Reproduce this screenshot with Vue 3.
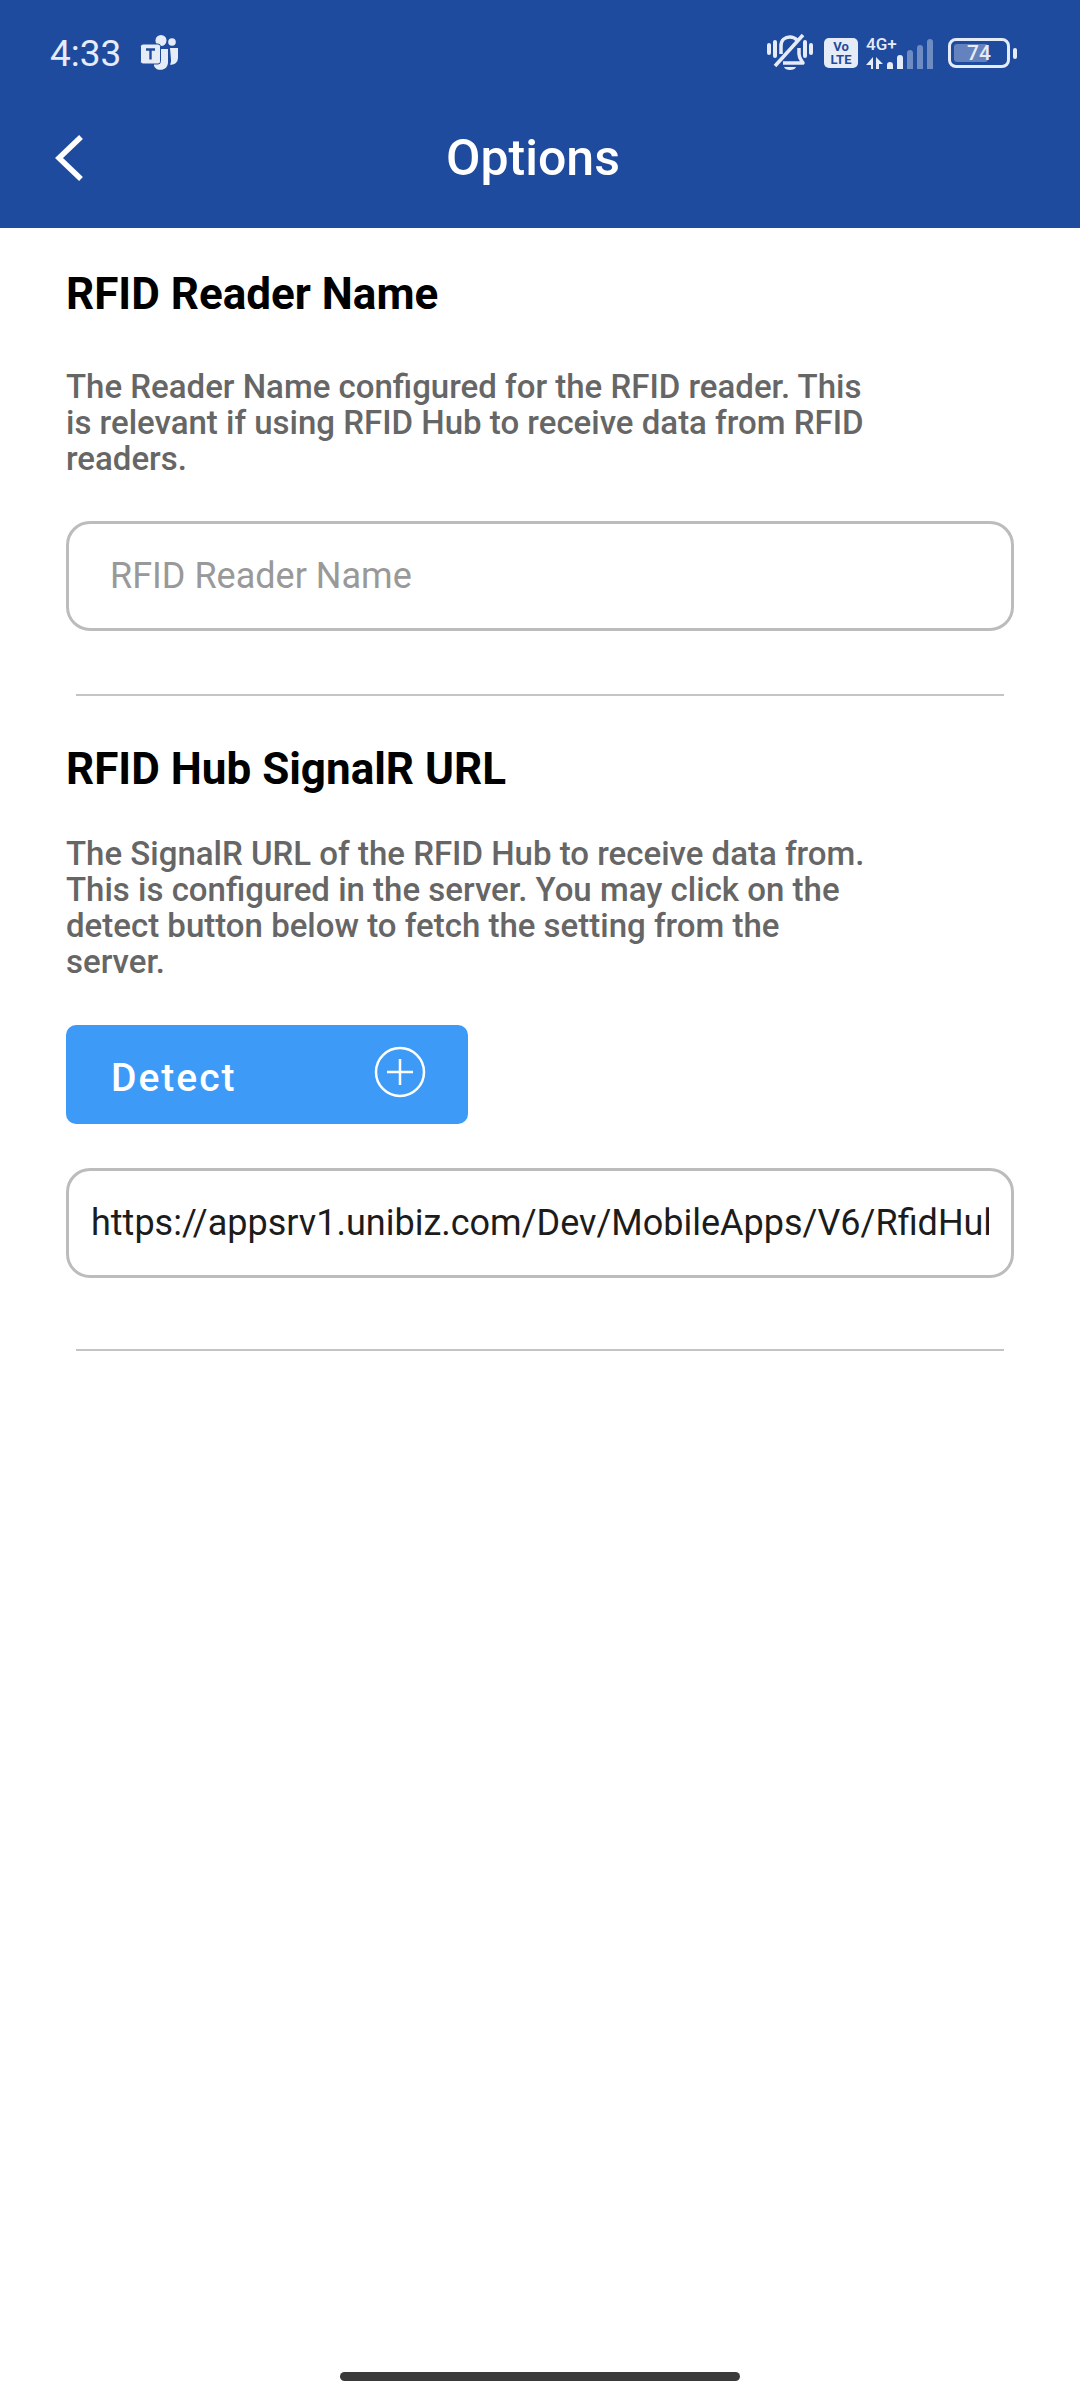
<script setup>
import { ref } from 'vue'

const readerName = ref('')
const hubUrl = ref('https://appsrv1.unibiz.com/Dev/MobileApps/V6/RfidHub')
</script>

<template>
  <div class="page">
    <header class="app-header">
      <div class="status-bar">
        <div class="status-left">
          <span class="clock">4:33</span>
          <svg class="teams" width="40" height="38" viewBox="0 0 40 38">
            <circle cx="21" cy="6.500" r="5.500" fill="#e6ecf7" />
            <circle cx="32" cy="8" r="3.800" fill="#e6ecf7" />
            <path d="M14 15h14v14a7.500 7.500 0 0 1-14 3z" fill="#e6ecf7" />
            <path d="M30 14h8v10a6.500 6.500 0 0 1-8 6.500c1-1.500 1-3 1-5z" fill="#e6ecf7" />
            <rect x="0.500" y="10" width="20" height="20" rx="2.500" fill="#e6ecf7" stroke="#1f4b9f" stroke-width="1" />
            <path d="M6 15.500h9M10.500 15.500v10" stroke="#1f4b9f" stroke-width="2.400" fill="none" />
          </svg>
        </div>
        <div class="status-right">
          <svg class="bell" width="46" height="40" viewBox="0 0 46 40" fill="none" stroke="#e6ecf7">
            <path d="M2 12v8M44 12v8" stroke-width="4" stroke-linecap="round" />
            <path d="M8 9v14M38 9v14" stroke-width="4" stroke-linecap="round" />
            <path d="M14 21c0-3 0-5 0-8 0-6 4-9 9-9 3 0 5 1 7 3" stroke-width="3.500" />
            <path d="M32 15v6c0 4 2 6 4 9H16" stroke-width="3.500" stroke-linejoin="round" />
            <path d="M36 2 8 33" stroke-width="3.500" />
            <path d="M17 34h12c-1 4-11 4-12 0z" fill="#e6ecf7" stroke="none" />
          </svg>
          <div class="volte"><span>Vo</span><span>LTE</span></div>
          <div class="network">
            <span class="net-label">4G+</span>
            <svg class="net-arrows" width="17" height="12" viewBox="0 0 17 12">
              <path d="M7 0v12h-2V8H0z M10 0l7 7h-4v5h-3z" fill="#e6ecf7" />
            </svg>
            <div class="signal">
              <i class="bar on" style="height: 7px"></i>
              <i class="bar on" style="height: 14px"></i>
              <i class="bar" style="height: 19px"></i>
              <i class="bar" style="height: 24px"></i>
              <i class="bar" style="height: 30px"></i>
            </div>
          </div>
          <div class="battery">
            <div class="battery-body">
              <div class="battery-fill"></div>
              <span class="battery-num">74</span>
            </div>
            <div class="battery-cap"></div>
          </div>
        </div>
      </div>
      <div class="nav-bar">
        <svg class="back" width="30" height="48" viewBox="0 0 30 48" fill="none">
          <path d="M27 3 5 24l22 21" stroke="#fff" stroke-width="5.500" />
        </svg>
        <h1 class="nav-title">Options</h1>
      </div>
    </header>

    <main class="content">
      <section class="block block-first">
        <h2 class="block-title">RFID Reader Name</h2>
        <p class="block-desc block-desc-first">The Reader Name configured for the RFID reader. This is relevant if using RFID Hub to receive data from RFID readers.</p>
        <input v-model="readerName" class="field field-placeholder" placeholder="RFID Reader Name" />
      </section>
      <div class="divider divider-first"></div>

      <section class="block">
        <h2 class="block-title">RFID Hub SignalR URL</h2>
        <p class="block-desc block-desc-second">The SignalR URL of the RFID Hub to receive data from. This is configured in the server. You may click on the detect button below to fetch the setting from the server.</p>
        <button class="detect-btn">
          <span class="detect-label">Detect</span>
          <svg width="52" height="52" viewBox="0 0 52 52" fill="none" stroke="#fff" stroke-width="2.500">
            <circle cx="26" cy="26" r="24" />
            <path d="M26 13v26M13 26h26" />
          </svg>
        </button>
        <input v-model="hubUrl" class="field field-url" />
      </section>
      <div class="divider divider-second"></div>
    </main>

    <div class="home-indicator"></div>
  </div>
</template>

<style>
html,
body {
  margin: 0;
  background: #fff;
}
</style>

<style scoped>
.page {
  width: 1080px;
  height: 2400px;
  background: #fff;
  display: flex;
  flex-direction: column;
  font-family: Roboto, "Liberation Sans", sans-serif;
  overflow: hidden;
}

.app-header {
  height: 228px;
  flex: none;
  background: #1f4b9f;
  display: flex;
  flex-direction: column;
}

.status-bar {
  height: 106px;
  padding: 0 63px 0 50px;
  display: flex;
  justify-content: space-between;
  align-items: center;
  color: #e6ecf7;
}

.status-left {
  display: flex;
  align-items: center;
  gap: 19px;
}

.clock {
  font-size: 37px;
  line-height: 1;
}

.status-right {
  display: flex;
  align-items: center;
}

.volte {
  width: 34px;
  height: 30px;
  margin-left: 11px;
  border-radius: 5px;
  background: #e6ecf7;
  color: #1f4b9f;
  display: flex;
  flex-direction: column;
  align-items: center;
  justify-content: center;
  font-size: 13px;
  font-weight: 700;
  line-height: 13px;
}

.network {
  position: relative;
  width: 68px;
  height: 31px;
  margin-left: 8px;
  display: flex;
  align-items: flex-end;
}

.net-label {
  position: absolute;
  left: 0;
  top: -2px;
  font-size: 17px;
  font-weight: 500;
  line-height: 17px;
}

.net-arrows {
  flex: none;
}

.signal {
  display: flex;
  align-items: flex-end;
  gap: 4px;
  margin-left: 4px;
}

.bar {
  width: 6px;
  border-radius: 3px 3px 0 0;
  background: rgba(230, 236, 247, 0.4);
}

.bar.on {
  background: #e6ecf7;
}

.battery {
  margin-left: 14px;
  display: flex;
  align-items: center;
  gap: 3px;
}

.battery-body {
  position: relative;
  box-sizing: border-box;
  width: 62px;
  height: 30px;
  border: 3px solid #e6ecf7;
  border-radius: 8px;
  display: flex;
  align-items: center;
  justify-content: center;
}

.battery-fill {
  position: absolute;
  left: 3px;
  top: 3px;
  bottom: 3px;
  width: 34px;
  border-radius: 3px;
  background: rgba(230, 236, 247, 0.35);
}

.battery-num {
  position: relative;
  font-size: 21px;
  font-weight: 500;
  line-height: 1;
}

.battery-cap {
  width: 4px;
  height: 11px;
  border-radius: 2px;
  background: #e6ecf7;
}

.nav-bar {
  position: relative;
  flex: 1;
  display: flex;
  align-items: center;
  justify-content: center;
  padding-bottom: 19px;
}

.back {
  position: absolute;
  left: 54px;
  top: 28px;
}

.nav-title {
  margin: 0 0 0 -14px;
  color: #fff;
  font-size: 50px;
  font-weight: 500;
  line-height: 1;
}

.content {
  padding: 0 66px;
}

.block {
  display: flex;
  flex-direction: column;
}

.block-first {
  padding-top: 41px;
}

.block-title {
  margin: 0;
  color: #000;
  font-size: 44px;
  font-weight: 700;
  line-height: 50px;
}

.block-desc {
  width: 810px;
  color: #666;
  font-size: 33px;
  font-weight: 500;
  line-height: 36px;
}

.block-desc-first {
  margin: 50px 0 0;
}

.block-desc-second {
  margin: 42px 0 0;
}

.field {
  box-sizing: border-box;
  width: 948px;
  height: 110px;
  border: 3px solid #bcbcbc;
  border-radius: 24px;
  background: #fff;
  outline: none;
  font-family: inherit;
  font-size: 36px;
}

.field-placeholder {
  margin-top: 44px;
  padding: 0 41px;
}

.field-placeholder::placeholder {
  color: #999;
  opacity: 1;
}

.field-url {
  margin-top: 44px;
  padding: 0 22px;
  color: #1c1c1c;
}

.detect-btn {
  width: 402px;
  height: 99px;
  margin-top: 45px;
  padding: 0 42px 0 45px;
  border: none;
  border-radius: 10px;
  background: #3d9bf7;
  color: #fff;
  display: flex;
  align-items: center;
  justify-content: space-between;
  font-family: inherit;
  font-size: 39px;
  font-weight: 500;
  letter-spacing: 2px;
}

.detect-label {
  margin-top: 6px;
}

.detect-btn svg {
  margin-bottom: 6px;
}

.divider {
  height: 2px;
  margin: 0 10px;
  background: #c4c4c4;
}

.divider-first {
  margin-top: 63px;
  margin-bottom: 48px;
}

.divider-second {
  margin-top: 71px;
}

.home-indicator {
  width: 400px;
  height: 9px;
  margin: auto auto 19px;
  border-radius: 5px;
  background: #3a3a3a;
}
</style>
